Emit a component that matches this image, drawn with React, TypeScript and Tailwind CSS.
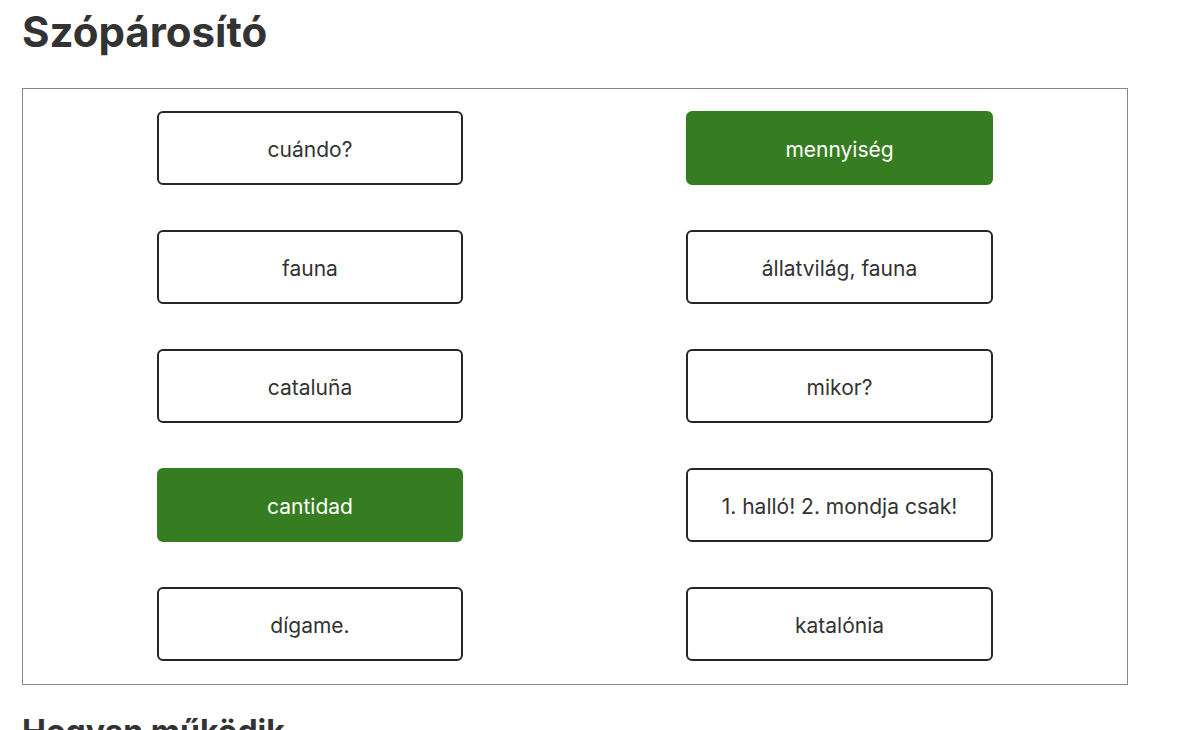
import React from "react";

const left = [
  { text: "cuándo?", on: false },
  { text: "fauna", on: false },
  { text: "cataluña", on: false },
  { text: "cantidad", on: true },
  { text: "dígame.", on: false },
];

const right = [
  { text: "mennyiség", on: true },
  { text: "állatvilág, fauna", on: false },
  { text: "mikor?", on: false },
  { text: "1. halló! 2. mondja csak!", on: false },
  { text: "katalónia", on: false },
];

function Card({ text, on }: { text: string; on: boolean }) {
  return (
    <button
      className={
        on
          ? "h-[74px] w-full rounded-[6px] border-2 border-[#367d21] bg-[#367d21] pt-[3px] text-[21px] text-white"
          : "h-[74px] w-full rounded-[6px] border-2 border-[#262626] bg-white pt-[3px] text-[21px] text-[#333]"
      }
    >
      {text}
    </button>
  );
}

export default function App() {
  return (
    <div
      className="min-h-screen bg-white text-[#333] overflow-hidden"
      style={{ fontFamily: "Inter, 'Noto Sans', sans-serif" }}
    >
      <div className="pl-[22px] w-[1128px]">
        <h1 className="pt-[7px] text-[42px] font-bold leading-[50px]">
          Szópárosító
        </h1>

        {/* Matching board */}
        <div className="mt-[31px] border border-[#888] px-[134px] pt-[22px] pb-[23px]">
          <div className="grid grid-cols-[306px_307px] justify-between">
            <div className="flex flex-col gap-[45px]">
              {left.map((c) => (
                <Card key={c.text} {...c} />
              ))}
            </div>
            <div className="flex flex-col gap-[45px]">
              {right.map((c) => (
                <Card key={c.text} {...c} />
              ))}
            </div>
          </div>
        </div>

        <h2 className="mt-[28px] text-[32px] font-bold leading-[38px]">
          Hogyan működik
        </h2>
      </div>
    </div>
  );
}
